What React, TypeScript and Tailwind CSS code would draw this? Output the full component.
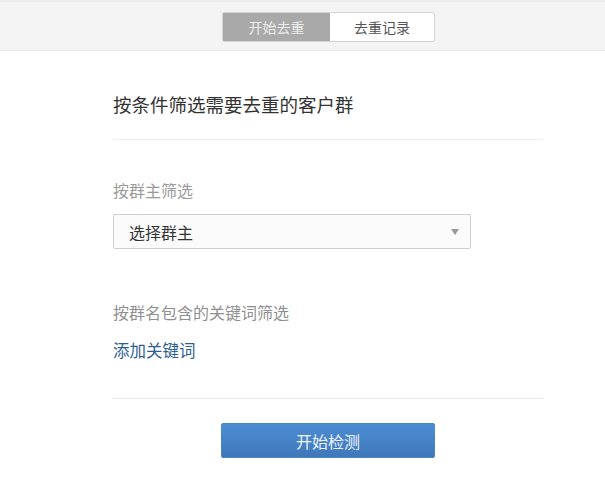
import React from "react";

export default function App() {
  const font = { fontFamily: '"Noto Sans CJK SC", "Noto Sans", sans-serif' };
  return (
    <div className="w-[605px] h-[484px] bg-white overflow-hidden" style={font}>
      <div className="h-[51px] bg-[#f4f4f4] border-t-2 border-[#ebebeb] border-b border-b-[#e6e6e6] flex justify-start pl-[222px] pt-[10px]">
        <div className="flex h-[30px] w-[213px] border border-[#d4d4d4] rounded-[2px] overflow-hidden">
          <div className="w-[107px] bg-[#a9a9a9] text-[#ececec] text-[14px] flex items-center justify-center">开始去重</div>
          <div className="flex-1 bg-white text-[#555] text-[14px] flex items-center justify-center">去重记录</div>
        </div>
      </div>
      <div className="pl-[113px] w-[543px]">
        <div className="mt-[41px] h-[24px] leading-[24px] text-[18.5px] text-[#333]">按条件筛选需要去重的客户群</div>
        <div className="mt-[23px] h-px bg-[#ececec]" />
        <div className="mt-[40px] h-[20px] leading-[20px] text-[16px] text-[#9a9a9a]">按群主筛选</div>
        <div className="mt-[14px] w-[358px] h-[35px] border border-[#cfcfcf] rounded-[2px] bg-[#fbfbfb] flex items-center justify-between pl-[15px] pr-[11px]">
          <span className="text-[16px] text-[#333]">选择群主</span>
          <svg width="8" height="6" viewBox="0 0 8 6"><path d="M0 0 L8 0 L4 6 Z" fill="#999" /></svg>
        </div>
        <div className="mt-[53px] h-[20px] leading-[20px] text-[16px] text-[#8f8f8f]">按群名包含的关键词筛选</div>
        <div className="mt-[18px] h-[20px] leading-[20px] text-[16.5px] text-[#2d5f91]">添加关键词</div>
        <div className="mt-[38px] h-px bg-[#e8e8e8]" />
        <div className="mt-[24px] flex pl-[108px]">
          <div className="w-[214px] h-[35px] rounded-[2px] border border-[#4a86c8] bg-gradient-to-b from-[#4d8dd3] to-[#3f78b9] text-[#eef4fb] text-[16px] flex items-center justify-center">开始检测</div>
        </div>
      </div>
    </div>
  );
}
